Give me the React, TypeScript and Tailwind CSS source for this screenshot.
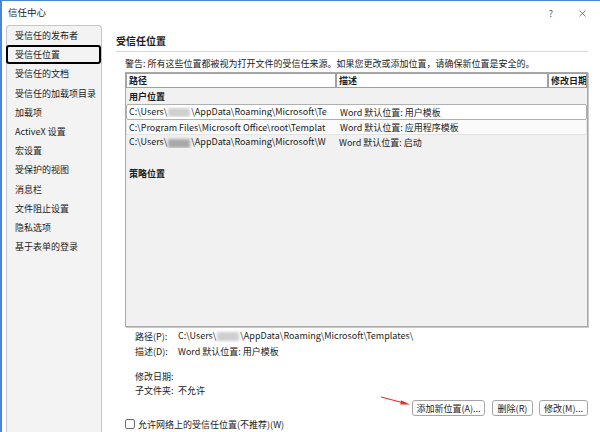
import { X } from "lucide-react";

const navItems = [
  "受信任的发布者",
  "受信任位置",
  "受信任的文档",
  "受信任的加载项目录",
  "加载项",
  "ActiveX 设置",
  "宏设置",
  "受保护的视图",
  "消息栏",
  "文件阻止设置",
  "隐私选项",
  "基于表单的登录",
];

function Nav() {
  return (
    <div className="ml-[4px] w-[96px] shrink-0 rounded-t-[4px] border border-b-0 border-[#c6c6c6] bg-[#f3f3f3]">
      {navItems.map((item, i) =>
        i === 1 ? (
          <div
            key={item}
            className="-ml-px flex h-[19.2px] items-center rounded-[3px] border-2 border-black pl-[7px]"
          >
            {item}
          </div>
        ) : (
          <div key={item} className="flex h-[19.2px] items-center pl-[8px]">
            {item}
          </div>
        )
      )}
    </div>
  );
}

function Blur({ dark }: { dark?: boolean }) {
  return (
    <span
      className={`mx-[1px] inline-block h-[9px] w-[22px] align-middle blur-[1.5px] ${
        dark ? "bg-[#a8a8a8]" : "bg-[#cfcfcf]"
      }`}
    />
  );
}

function LocationTable() {
  return (
    <div className="ml-[9px] mt-[2px] flex h-[255px] flex-col border border-[#a9a9a9] bg-[#f1f1f1] shadow-[1px_1px_0_#c9c9c9]">
      <div className="flex h-[15px] font-bold">
        <div className="flex w-[210px] items-center border border-[#a0a0a0] bg-white pl-[2px]">路径</div>
        <div className="flex w-[212px] items-center border border-[#a0a0a0] bg-white pl-[2px]">描述</div>
        <div className="flex flex-1 items-center overflow-hidden whitespace-nowrap border border-[#a0a0a0] bg-white pl-[2px]">
          修改日期
        </div>
      </div>

      <div className="flex h-[16px] items-center pl-[3px] font-bold">用户位置</div>

      <div className="flex h-[16px] items-center rounded-[2px] border border-[#b0b0b0] bg-white">
        <div className="w-[210px] overflow-hidden whitespace-nowrap pl-[2px]">
          C:\Users\
          <Blur />
          \AppData\Roaming\Microsoft\Te
        </div>
        <div className="pl-[3px]">Word 默认位置: 用户模板</div>
      </div>

      <div className="flex h-[15px] items-center border-x border-b border-[#e4e4e4] bg-[#fafafa]">
        <div className="w-[210px] overflow-hidden whitespace-nowrap pl-[2px]">
          C:\Program Files\Microsoft Office\root\Templat
        </div>
        <div className="pl-[3px]">Word 默认位置: 应用程序模板</div>
      </div>

      <div className="flex h-[15px] items-center">
        <div className="w-[210px] overflow-hidden whitespace-nowrap pl-[3px]">
          C:\Users\
          <Blur dark />
          \AppData\Roaming\Microsoft\W
        </div>
        <div className="pl-[3px]">Word 默认位置: 启动</div>
      </div>

      <div className="mt-[15px] flex h-[16px] items-center pl-[3px] font-bold">策略位置</div>
    </div>
  );
}

function Main() {
  return (
    <div className="flex min-w-0 flex-1 flex-col pl-[14px] pr-[12px]">
      <div className="border-b border-[#d6d6d6] pb-[4px] pt-[10px] text-[10px] font-bold leading-[12px]">
        受信任位置
      </div>
      <div className="mt-[6px] h-[12px] whitespace-nowrap pl-[9px] leading-[12px]">
        警告: 所有这些位置都被视为打开文件的受信任来源。如果您更改或添加位置，请确保新位置是安全的。
      </div>

      <LocationTable />

      <div className="mt-[2px] pl-[19px]">
        <div className="flex h-[14px] items-center">
          <span className="w-[43px]">路径(P):</span>
          <span className="whitespace-nowrap">
            C:\Users\
            <Blur />
            \AppData\Roaming\Microsoft\Templates\
          </span>
        </div>
        <div className="mt-[1px] flex h-[14px] items-center">
          <span className="w-[43px]">描述(D):</span>
          <span>Word 默认位置: 用户模板</span>
        </div>
        <div className="mt-[11px] flex h-[14px] items-center">
          <span className="w-[43px]">修改日期:</span>
        </div>
        <div className="flex h-[14px] items-center">
          <span className="w-[43px]">子文件夹:</span>
          <span>不允许</span>
        </div>
      </div>

      <div className="mt-[3px] flex justify-end gap-[6px]">
        <button className="flex h-[16px] w-[73px] items-center justify-center rounded-[3px] border border-[#a5a5a5] bg-white">
          添加新位置(A)...
        </button>
        <button className="ml-[1px] flex h-[16px] w-[41px] items-center justify-center rounded-[3px] border border-[#a5a5a5] bg-white">
          删除(R)
        </button>
        <button className="flex h-[16px] w-[49px] items-center justify-center rounded-[3px] border border-[#a5a5a5] bg-white">
          修改(M)...
        </button>
      </div>

      <div className="mt-[3px] flex items-center pl-[9px]">
        <span className="h-[10px] w-[10px] rounded-[2px] border border-[#6d6d6d] bg-white" />
        <span className="ml-[3px]">允许网络上的受信任位置(不推荐)(W)</span>
      </div>
    </div>
  );
}

export default function App() {
  return (
    <div className="relative h-[432px] w-[600px] overflow-hidden border-l-2 border-t border-[#4a86d6] bg-white font-['Noto_Sans_CJK_SC','Noto_Sans',sans-serif] text-[9px] leading-none text-[#1b1b1b]">
      <div className="flex h-[24px] items-center pl-[6px] pr-[12px]">
        <span className="text-[9.5px]">信任中心</span>
        <span className="ml-auto mr-[24px] text-[9px] text-[#555]">?</span>
        <X size={11} strokeWidth={1.3} className="text-[#333]" />
      </div>

      <div className="flex h-[408px]">
        <Nav />
        <Main />
      </div>

      {/* red annotation arrow */}
      <svg className="absolute left-[377px] top-[393px]" width="34" height="14" viewBox="0 0 34 14">
        <line x1="2" y1="3" x2="27" y2="9.5" stroke="#e8302a" strokeWidth="1.2" />
        <path d="M22 6.2 L31 10.6 L21.2 10.4 Z" fill="#e8302a" />
      </svg>
    </div>
  );
}
